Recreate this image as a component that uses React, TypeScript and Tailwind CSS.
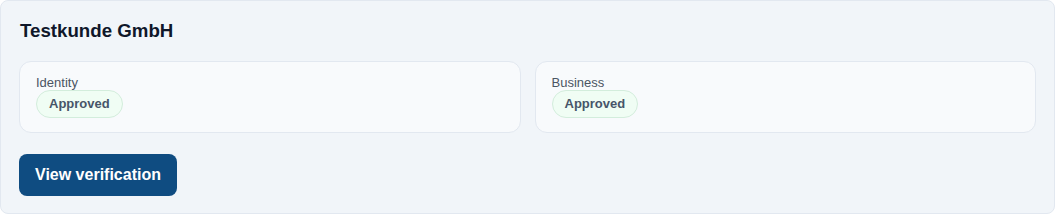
import React from "react";

function StatusCard({ label }: { label: string }) {
  return (
    <div className="flex-1 rounded-xl border border-[#e2e8f0] bg-[#f8fafc] px-4 py-[14px]">
      <div className="text-[13px] leading-[14px] text-[#4b5563]">{label}</div>
      <span className="inline-flex h-[28px] items-center rounded-full border border-[#d3eddc] bg-[#f0fdf4] px-3 text-[13px] font-bold text-[#475569]">
        Approved
      </span>
    </div>
  );
}

export default function App() {
  return (
    <div
      className="h-[215px] w-[1056px] bg-white"
      style={{ fontFamily: '"Liberation Sans", Arial, sans-serif' }}
    >
      <div className="flex h-[214px] w-[1055px] flex-col rounded-lg border border-[#e2e8f0] bg-[#f1f5f9] px-[18px] pt-[17px]">
        <h2 className="pl-[1px] text-[18.7px] font-bold leading-[25px] text-[#0f172a]">Testkunde GmbH</h2>
        <div className="mt-[18px] flex gap-[14px]">
          <StatusCard label="Identity" />
          <StatusCard label="Business" />
        </div>
        <div className="mt-[21px]">
          <button className="h-[42px] rounded-lg bg-[#0f4c81] px-4 text-[16px] font-bold text-white">
            View verification
          </button>
        </div>
      </div>
    </div>
  );
}
